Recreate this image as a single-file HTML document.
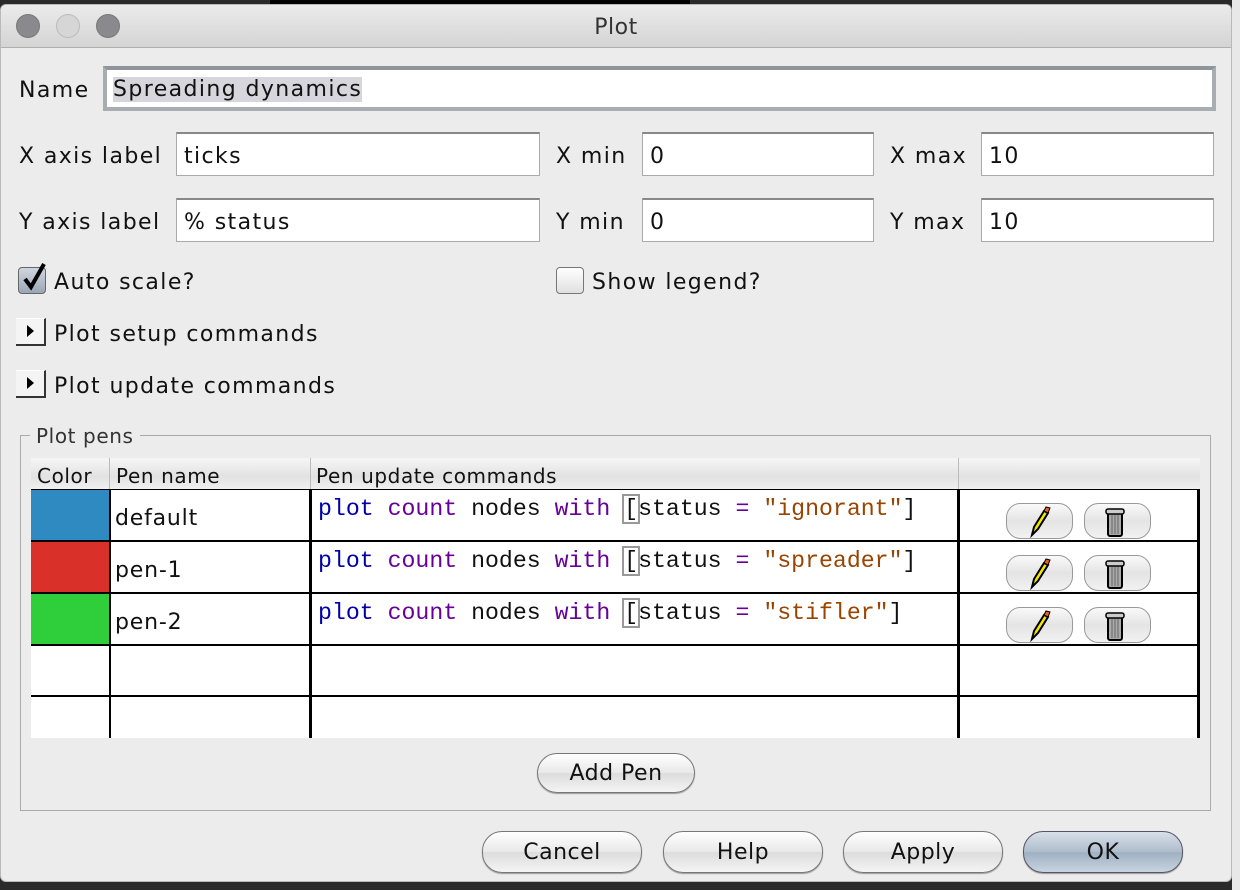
<!DOCTYPE html>
<html><head><style>
*{box-sizing:border-box;margin:0;padding:0}
body{width:1240px;height:890px;background:#2a2a2a;position:relative;overflow:hidden;font-family:"DejaVu Sans","Liberation Sans",sans-serif;font-size:22px;letter-spacing:1.4px;color:#111}
.a{position:absolute}
.win{left:0;top:4px;width:1232px;height:878px;background:#ececec;border-radius:6px;overflow:hidden;border:1px solid #b9b9b9}
.tb{left:0;top:0;width:100%;height:43px;background:linear-gradient(#ebebeb,#d4d4d4);border-bottom:1px solid #b0b0b0}
.dot{width:24px;height:24px;border-radius:50%;top:9px}
.lbl{white-space:nowrap;line-height:26px;margin-top:2px}
.fld{background:#fff;border:1px solid #aaa;border-top:2px solid #888;line-height:42px;padding-left:7px;padding-top:2px;white-space:nowrap;overflow:hidden}
.btn{border:1px solid #777;border-radius:20px;background:linear-gradient(#fff,#e8e8e8 50%,#dcdcdc 51%,#f4f4f4);text-align:center;box-shadow:0 1px 1px #999;letter-spacing:0.5px}
.mono{font-family:"Liberation Mono","DejaVu Sans Mono",monospace;font-size:23.2px;letter-spacing:0}
.cell{position:absolute;background:#fff}
.hd{font-size:20px;letter-spacing:0.6px}
</style></head><body>
<div class="a" style="left:1232px;top:0;width:8px;height:890px;background:#e8e8e8"></div>
<div class="a" style="left:270px;top:0;width:420px;height:6px;background:#000"></div>
<div class="a win">
 <div class="a tb">
  <div class="a dot" style="left:15px;background:#8a8a8e;border:1px solid #777"></div>
  <div class="a dot" style="left:55px;background:#d6d6d6;border:1px solid #bbb"></div>
  <div class="a dot" style="left:95px;background:#8a8a8e;border:1px solid #777"></div>
  <div class="a" style="left:0;width:100%;top:10px;text-align:center;color:#333;font-size:22px;letter-spacing:0.5px">Plot</div>
 </div>
</div>
<div class="a lbl" style="left:19px;top:76px">Name</div>
<div class="a fld" style="left:103px;top:66px;width:1113px;height:45px;border:4px solid #a8adb3;border-top-color:#8f949a;line-height:36px;padding-left:6px"><span style="background:#d6d6dc">Spreading dynamics</span></div>

<div class="a lbl" style="left:19px;top:142px">X axis label</div>
<div class="a fld" style="left:176px;top:132px;width:364px;height:44px">ticks</div>
<div class="a lbl" style="left:556px;top:142px">X min</div>
<div class="a fld" style="left:642px;top:132px;width:232px;height:44px">0</div>
<div class="a lbl" style="left:890px;top:142px">X max</div>
<div class="a fld" style="left:981px;top:132px;width:233px;height:44px">10</div>

<div class="a lbl" style="left:19px;top:208px">Y axis label</div>
<div class="a fld" style="left:176px;top:198px;width:364px;height:44px">% status</div>
<div class="a lbl" style="left:556px;top:208px">Y min</div>
<div class="a fld" style="left:642px;top:198px;width:232px;height:44px">0</div>
<div class="a lbl" style="left:890px;top:208px">Y max</div>
<div class="a fld" style="left:981px;top:198px;width:233px;height:44px">10</div>

<div class="a" style="left:18px;top:267px;width:28px;height:27px;border:1px solid #666;border-radius:4px;background:linear-gradient(#cfd6e0,#9aa6b6)"></div>
<svg class="a" style="left:18px;top:260px" width="32" height="34"><path d="M7 19 L13 27 L26 4" fill="none" stroke="#000" stroke-width="4"/></svg>
<div class="a lbl" style="left:54px;top:268px">Auto scale?</div>
<div class="a" style="left:556px;top:267px;width:28px;height:27px;border:1px solid #777;border-radius:4px;background:linear-gradient(#fff,#e0e0e0)"></div>
<div class="a lbl" style="left:592px;top:268px">Show legend?</div>

<div class="a" style="left:16px;top:318px;width:30px;height:28px;background:#f4f4f4;border-right:2px solid #333;border-bottom:2px solid #333;border-top:1px solid #fff"></div>
<div class="a" style="left:27px;top:325px;width:0;height:0;border-left:7px solid #000;border-top:6px solid transparent;border-bottom:6px solid transparent"></div>
<div class="a lbl" style="left:54px;top:320px">Plot setup commands</div>
<div class="a" style="left:16px;top:370px;width:30px;height:28px;background:#f4f4f4;border-right:2px solid #333;border-bottom:2px solid #333;border-top:1px solid #fff"></div>
<div class="a" style="left:27px;top:377px;width:0;height:0;border-left:7px solid #000;border-top:6px solid transparent;border-bottom:6px solid transparent"></div>
<div class="a lbl" style="left:54px;top:372px">Plot update commands</div>

<div class="a" style="left:20px;top:435px;width:1191px;height:376px;border:1px solid #aaa"></div>
<div class="a lbl hd" style="left:30px;top:421px;background:#ececec;padding:0 6px;color:#333">Plot pens</div>

<div class="a" style="left:31px;top:458px;width:1169px;height:280px;background:#000"></div>
<div class="a" style="left:31px;top:458px;width:1169px;height:31px;background:linear-gradient(#f6f6f6,#e2e2e2 60%,#f0f0f0)"></div>
<div class="a" style="left:109px;top:458px;width:1px;height:31px;background:#bbb"></div>
<div class="a" style="left:310px;top:458px;width:1px;height:31px;background:#bbb"></div>
<div class="a" style="left:958px;top:458px;width:1px;height:31px;background:#bbb"></div>
<div class="a lbl hd" style="left:37px;top:461px">Color</div>
<div class="a lbl hd" style="left:116px;top:461px">Pen name</div>
<div class="a lbl hd" style="left:316px;top:461px">Pen update commands</div>

<div class="cell" style="left:31px;top:490px;width:78px;height:50px;background:#2e8ac0"></div>
<div class="cell" style="left:31px;top:542px;width:78px;height:50px;background:#d9312a"></div>
<div class="cell" style="left:31px;top:594px;width:78px;height:50px;background:#2ecf3b"></div>
<div class="cell" style="left:31px;top:646px;width:78px;height:49px"></div>
<div class="cell" style="left:31px;top:697px;width:78px;height:41px"></div>

<div class="cell" style="left:111px;top:490px;width:198px;height:50px"><span class="lbl a" style="left:4px;top:14px;letter-spacing:0.8px">default</span></div>
<div class="cell" style="left:111px;top:542px;width:198px;height:50px"><span class="lbl a" style="left:4px;top:14px;letter-spacing:0.8px">pen-1</span></div>
<div class="cell" style="left:111px;top:594px;width:198px;height:50px"><span class="lbl a" style="left:4px;top:14px;letter-spacing:0.8px">pen-2</span></div>
<div class="cell" style="left:111px;top:646px;width:198px;height:49px"></div>
<div class="cell" style="left:111px;top:697px;width:198px;height:41px"></div>

<div class="cell mono" style="left:312px;top:490px;width:645px;height:50px"><span class="a" style="left:6px;top:6px;white-space:pre"><span style="color:#0000aa">plot</span> <span style="color:#660099">count</span> nodes <span style="color:#660099">with</span> <span style="outline:2px solid #999">[</span>status <span style="color:#660099">=</span> <span style="color:#994400">"ignorant"</span>]</span></div>
<div class="cell mono" style="left:312px;top:542px;width:645px;height:50px"><span class="a" style="left:6px;top:6px;white-space:pre"><span style="color:#0000aa">plot</span> <span style="color:#660099">count</span> nodes <span style="color:#660099">with</span> <span style="outline:2px solid #999">[</span>status <span style="color:#660099">=</span> <span style="color:#994400">"spreader"</span>]</span></div>
<div class="cell mono" style="left:312px;top:594px;width:645px;height:50px"><span class="a" style="left:6px;top:6px;white-space:pre"><span style="color:#0000aa">plot</span> <span style="color:#660099">count</span> nodes <span style="color:#660099">with</span> <span style="outline:2px solid #999">[</span>status <span style="color:#660099">=</span> <span style="color:#994400">"stifler"</span>]</span></div>
<div class="cell" style="left:312px;top:646px;width:645px;height:49px"></div>
<div class="cell" style="left:312px;top:697px;width:645px;height:41px"></div>

<div class="cell" style="left:960px;top:490px;width:237px;height:50px"></div>
<div class="cell" style="left:960px;top:542px;width:237px;height:50px"></div>
<div class="cell" style="left:960px;top:594px;width:237px;height:50px"></div>
<div class="cell" style="left:960px;top:646px;width:237px;height:49px"></div>
<div class="cell" style="left:960px;top:697px;width:237px;height:41px"></div>
<div class="a" style="left:1200px;top:458px;width:10px;height:280px;background:#ececec"></div>

<svg class="a" style="left:1000px;top:500px" width="160" height="150" viewBox="0 0 160 150">
 <defs><linearGradient id="g" x1="0" y1="0" x2="0" y2="1"><stop offset="0" stop-color="#fafafa"/><stop offset=".5" stop-color="#e4e4e4"/><stop offset="1" stop-color="#f2f2f2"/></linearGradient></defs>
 <g id="r">
  <rect x="6.5" y="3.5" width="66" height="35" rx="14" fill="url(#g)" stroke="#999"/>
  <rect x="84.5" y="3.5" width="66" height="35" rx="14" fill="url(#g)" stroke="#999"/>
  <path d="M32 35 L34 27 L44 11 L48 13 L38 29 Z" fill="#f5e800" stroke="#000" stroke-width="2"/>
  <path d="M44 11 L46 7 L50 8 L48 13 Z" fill="#e6601a" stroke="#000" stroke-width="1"/>
  <rect x="108" y="12" width="14" height="24" rx="2" fill="#aaa" stroke="#000" stroke-width="2"/>
  <rect x="106" y="9" width="18" height="5" rx="2" fill="#ccc" stroke="#000" stroke-width="1.5"/>
  <path d="M112 15 V34 M115 15 V34 M118 15 V34" stroke="#666"/>
 </g>
 <use href="#r" y="52"/><use href="#r" y="104"/>
</svg>

<div class="a btn" style="left:537px;top:753px;width:158px;height:40px;line-height:40px">Add Pen</div>
<div class="a btn" style="left:482px;top:831px;width:160px;height:42px;line-height:42px">Cancel</div>
<div class="a btn" style="left:663px;top:831px;width:160px;height:42px;line-height:42px">Help</div>
<div class="a btn" style="left:843px;top:831px;width:160px;height:42px;line-height:42px">Apply</div>
<div class="a btn" style="left:1023px;top:831px;width:160px;height:42px;line-height:40px;background:linear-gradient(#d8e0ea,#aebccb 50%,#9fb0c2 51%,#c8d4e0);border-color:#556"></div>
<div class="a" style="left:1023px;top:832px;width:160px;line-height:42px;text-align:center;letter-spacing:0.5px">OK</div>
</body></html>
